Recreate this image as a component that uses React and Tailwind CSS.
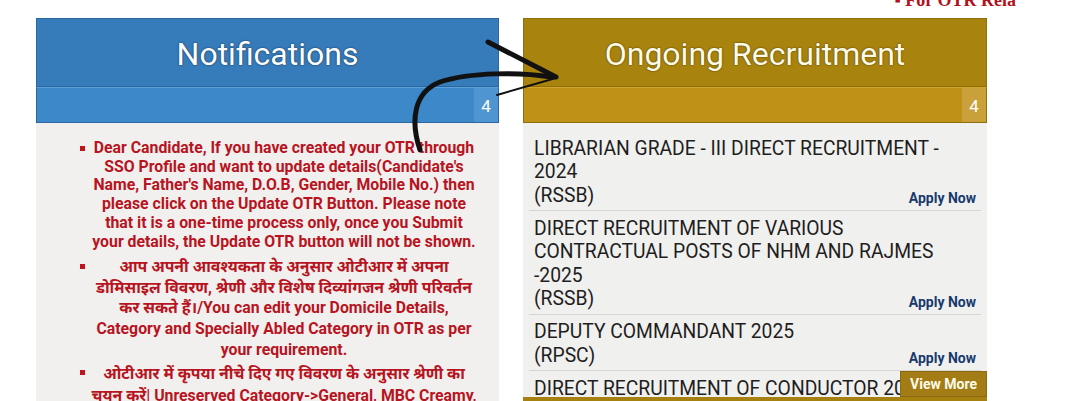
import React from "react";

const F = { fontFamily: "Roboto, 'Noto Sans', 'Liberation Sans', sans-serif" };

function LeftPanel() {
  const item1 = [
    "Dear Candidate, If you have created your OTR through",
    "SSO Profile and want to update details(Candidate's",
    "Name, Father's Name, D.O.B, Gender, Mobile No.) then",
    "please click on the Update OTR Button. Please note",
    "that it is a one-time process only, once you Submit",
    "your details, the Update OTR button will not be shown.",
  ];
  const item2 = [
    "आप अपनी आवश्यकता के अनुसार ओटीआर में अपना",
    "डोमिसाइल विवरण, श्रेणी और विशेष दिव्यांगजन श्रेणी परिवर्तन",
    "कर सकते हैं।/You can edit your Domicile Details,",
    "Category and Specially Abled Category in OTR as per",
    "your requirement.",
  ];
  const item3 = [
    "ओटीआर में कृपया नीचे दिए गए विवरण के अनुसार श्रेणी का",
    "चयन करें| Unreserved Category->General, MBC Creamy,",
  ];
  const Item = ({ lines, lh, extra }) => (
    <li className={`flex ${extra}`}>
      <span className="w-[5px] h-[5px] bg-[#c0141f] mt-[7px] shrink-0" />
      <div className="flex-1 text-center ml-[2px]">
        {lines.map((l, i) => (
          <div key={i} className={`whitespace-nowrap ${lh}`}>{l}</div>
        ))}
      </div>
    </li>
  );
  return (
    <div className="w-[463px] shrink-0 flex flex-col" style={F}>
      <div className="h-[69px] bg-[#367bba] border border-[#2c67a0] flex items-center justify-center">
        <span
          className="text-white text-[32px] mt-[2px]"
          style={{ textShadow: "0 0 2px #1d3f63, 0 0 1px #1d3f63" }}
        >
          Notifications
        </span>
      </div>
      <div className="h-[36px] bg-[#3c88c8] border-x border-b border-[#2c67a0] border-t border-t-[#5a9fd8] flex justify-end">
        <div className="w-[24px] bg-[#4f95d1] text-white text-[17px] flex items-center justify-center pt-[3px]">
          4
        </div>
      </div>
      <div className="bg-[#f1f0ee] pt-[16px] pl-[44px] pr-[18px] h-[300px]">
        <ul className="flex flex-col text-[#b8141f] font-bold text-[15.8px]">
          <Item lines={item1} lh="leading-[18.7px]" extra="mb-[6px]" />
          <Item lines={item2} lh="leading-[20.6px]" extra="mb-[3px]" />
          <Item lines={item3} lh="leading-[22px]" extra="" />
        </ul>
      </div>
    </div>
  );
}

function RightPanel() {
  const items = [
    { lines: ["LIBRARIAN GRADE - III DIRECT RECRUITMENT -", "2024", "(RSSB)"] },
    { lines: ["DIRECT RECRUITMENT OF VARIOUS", "CONTRACTUAL POSTS OF NHM AND RAJMES", "-2025", "(RSSB)"] },
    { lines: ["DEPUTY COMMANDANT 2025", "(RPSC)"] },
    { lines: ["DIRECT RECRUITMENT OF CONDUCTOR 2025", "(RSRTC)"] },
  ];
  return (
    <div className="w-[464px] shrink-0 flex flex-col" style={F}>
      <div className="h-[69px] bg-[#a8840f] border border-[#8e6f0c] flex items-center justify-center">
        <span
          className="text-[#fffbe6] text-[32px] mt-[2px]"
          style={{ textShadow: "0 0 2px #5a4507, 0 0 1px #5a4507" }}
        >
          Ongoing Recruitment
        </span>
      </div>
      <div className="h-[36px] bg-[#bf9117] border-x border-b border-[#8e6f0c] border-t border-t-[#d2a52a] flex justify-end">
        <div className="w-[24px] bg-[#c9a03a] text-white text-[17px] flex items-center justify-center pt-[3px]">
          4
        </div>
      </div>
      <div className="relative bg-[#f0f0ee] h-[274px] overflow-hidden px-[6px] pt-[8px]">
        {items.map((it, i) => (
          <div key={i} className="relative border-b border-[#d6d6d4] pl-[5px] pt-[5.5px] pb-[3px]">
            <div className="text-[#1e1e1e] text-[19.3px] leading-[23.5px]">
              {it.lines.map((l, j) => (
                <div key={j} className="whitespace-nowrap">{l}</div>
              ))}
            </div>
            <span className="absolute right-[5px] bottom-[3px] whitespace-nowrap text-[#173a6d] font-bold text-[14px] leading-[17px]">
              Apply Now
            </span>
          </div>
        ))}
        <div className="absolute right-0 top-[248px] h-[26px] w-[87px] bg-[#a47c16] border border-[#8a6912] flex items-center justify-center text-[#fffbe8] font-bold text-[14px]">
          View More
        </div>
      </div>
      <div className="h-[10px] bg-[#a7810f]" />
    </div>
  );
}

export default function App() {
  return (
    <div className="relative w-[1080px] h-[401px] overflow-hidden bg-white">
      <div className="h-[18px] flex justify-end pr-[64px]">
        <span
          className="text-[#b0121c] font-bold text-[18px] -mt-[13px]"
          style={{ fontFamily: "'Liberation Serif', serif" }}
        >
          ▪ For OTR Rela
        </span>
      </div>
      <div className="flex gap-[24px] pl-[36px]">
        <LeftPanel />
        <RightPanel />
      </div>
      <svg className="absolute left-0 top-0 pointer-events-none" width="1080" height="401" viewBox="0 0 1080 401">
        <path
          d="M 420 150 C 410 120, 414 92, 440 82 C 470 72, 520 72, 552 77"
          fill="none"
          stroke="#111"
          strokeWidth="5"
          strokeLinecap="round"
        />
        <path d="M 488 42 L 556 77" stroke="#111" strokeWidth="5" strokeLinecap="round" fill="none" />
        <path d="M 497 95 L 556 78" stroke="#111" strokeWidth="2" strokeLinecap="round" fill="none" />
      </svg>
    </div>
  );
}
